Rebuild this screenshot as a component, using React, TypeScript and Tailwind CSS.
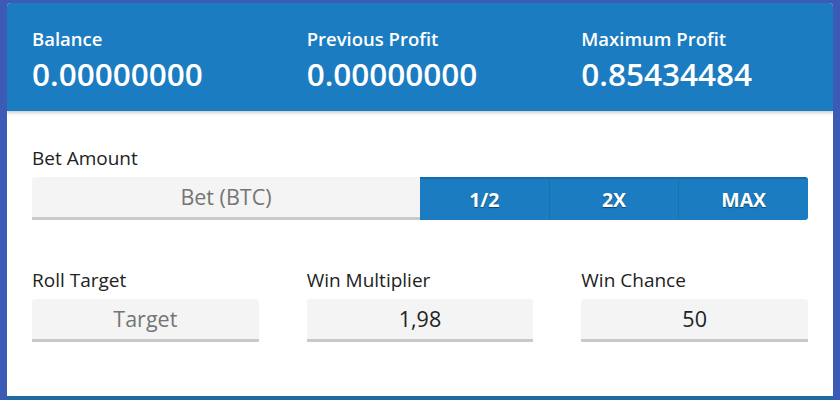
import React from "react";

const font = { fontFamily: '"Open Sans", "Noto Sans", sans-serif' };

function Stat({ label, value }: { label: string; value: string }) {
  return (
    <div className="flex flex-col">
      <div className="text-[18.5px] font-semibold leading-[22px] text-white">{label}</div>
      <div className="mt-[6px] text-[31.5px] font-semibold leading-[36px] text-white">{value}</div>
    </div>
  );
}

function Field({ label, value, placeholder }: { label: string; value?: string; placeholder?: string }) {
  return (
    <div className="flex flex-col">
      <div className="text-[19px] leading-[24px] text-[#222]">{label}</div>
      <div className="mt-[7px] h-[43px] rounded-t-[3px] bg-[#f4f4f4] border-b-[3px] border-[#c9c9c9] flex items-center justify-center text-[21.5px] font-medium">
        {value ? <span className="text-[#222]">{value}</span> : <span className="text-[#757575]">{placeholder}</span>}
      </div>
    </div>
  );
}

export default function App() {
  return (
    <div className="w-[840px] h-[400px] bg-[#3c5bb7] pt-[3px] px-[7px] pb-0 overflow-hidden" style={font}>
      <div className="w-[826px] h-[397px] rounded-t-[4px] bg-white overflow-hidden flex flex-col border-b-[4px] border-[#1f6aa0]">
        <div className="h-[108px] bg-[#1b7cc1] grid grid-cols-3 gap-[48px] px-[25px] pt-[25px] shadow-[0_2px_3px_rgba(0,0,0,0.2)] relative z-10">
          <Stat label="Balance" value="0.00000000" />
          <Stat label="Previous Profit" value="0.00000000" />
          <Stat label="Maximum Profit" value="0.85434484" />
        </div>
        <div className="px-[25px] pt-[35px]">
          <div className="text-[19px] leading-[24px] text-[#222]">Bet Amount</div>
          <div className="mt-[7px] flex h-[43px]">
            <div className="flex-1 rounded-tl-[3px] bg-[#f4f4f4] border-b-[3px] border-[#c9c9c9] flex items-center justify-center text-[21.5px] font-medium text-[#757575]">
              Bet (BTC)
            </div>
            <div className="w-[388px] flex bg-[#1b7cc1] border-t-[2px] border-[#166aa6] rounded-r-[3px] overflow-hidden">
              {["1/2", "2X", "MAX"].map((t, i) => (
                <div
                  key={t}
                  className={`flex-1 flex items-center justify-center text-white font-bold text-[19.5px] [text-shadow:0_1px_1px_rgba(0,0,0,0.45)] ${i > 0 ? "border-l border-[#1870b0]" : ""}`}
                >
                  {t}
                </div>
              ))}
            </div>
          </div>
          <div className="mt-[48px] grid grid-cols-3 gap-[48px]">
            <Field label="Roll Target" placeholder="Target" />
            <Field label="Win Multiplier" value="1,98" />
            <Field label="Win Chance" value="50" />
          </div>
        </div>
      </div>
    </div>
  );
}
